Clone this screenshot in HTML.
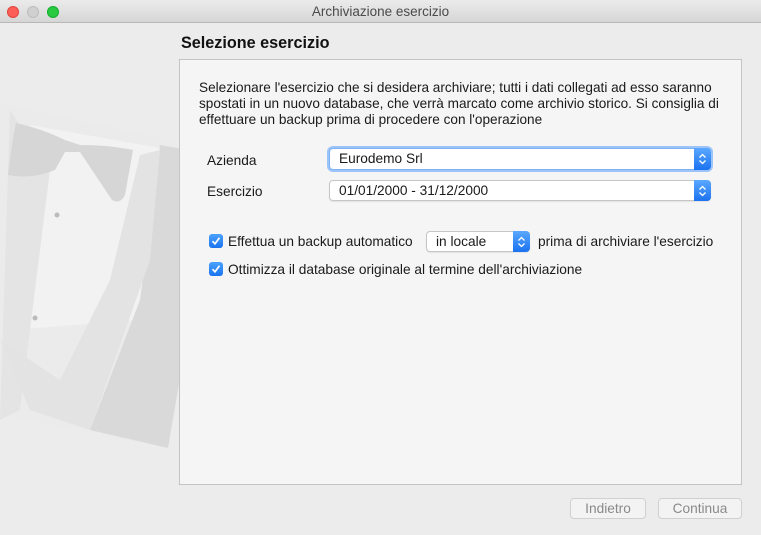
<!DOCTYPE html>
<html><head><meta charset="utf-8"><style>
*{margin:0;padding:0;box-sizing:border-box}
body{width:761px;height:535px;overflow:hidden;background:#ececec;font-family:"Liberation Sans",sans-serif;font-size:13.7px;color:#1a1a1a;position:relative}
.tb{position:absolute;left:0;top:0;width:761px;height:23px;background:linear-gradient(#ebebeb,#d6d6d6);border-bottom:1px solid #b8b8b8;text-align:center;line-height:23px;color:#4a4a4a;font-size:13.5px}
.dot{position:absolute;top:6px;width:12px;height:12px;border-radius:50%}
.abs{position:absolute;white-space:nowrap}
.panel{position:absolute;left:179px;top:59px;width:563px;height:426px;background:#f5f5f5;border:1px solid #c4c4c4}
.pop{position:absolute;background:#fff;border:1px solid #c6c6c6;border-radius:4px;box-shadow:0 1px 1px rgba(0,0,0,.08);padding-left:9px;line-height:19px}
.pop .ar{position:absolute;right:-1px;top:-1px;bottom:-1px;width:17px;background:linear-gradient(#5aa8ff,#1b72f0);border-radius:0 4px 4px 0}
.pop .ar svg{position:absolute;left:4px;top:50%;margin-top:-6px}
.cb{position:absolute;width:14px;height:14px;border-radius:3px;background:linear-gradient(#4aa2ff,#1a73ee)}
.btn{position:absolute;height:21px;background:#f3f3f3;border:1px solid #d0d0d0;border-radius:4px;color:#8a8a8a;text-align:center;line-height:19px}
</style></head><body>
<div class="tb">Archiviazione esercizio</div>
<div class="dot" style="left:7px;background:#fc5f57;border:1px solid #e0443e"></div>
<div class="dot" style="left:27px;background:#d0d0d0;border:1px solid #bdbdbd"></div>
<div class="dot" style="left:47px;background:#29c940;border:1px solid #14ae2c"></div>

<svg class="abs" style="left:0;top:80px" width="240" height="380" viewBox="0 80 240 380">
<polygon points="0,104 222,150 168,448 0,415" fill="#ebebeb"/>
<polygon points="30,125 160,148 140,320 10,330" fill="#f2f2f2"/>
<path d="M10 110 L0 420 L20 410 L50 170 Z" fill="#e4e4e4"/>
<path d="M160 145 L218 155 L168 448 L90 430 L140 300 Z" fill="#d9d9d9"/>
<path d="M0 340 L30 410 L90 430 L150 260 L160 150 L140 155 L110 280 L60 380 Z" fill="#e3e3e3"/>
<path d="M16 123 Q12 140 8 175 Q30 180 55 170 L65 152 L80 152 L112 200 Q120 205 125 195 L133 150 Q110 145 80 145 L65 140 Q40 128 16 123 Z" fill="#d6d6d6"/>
<circle cx="57" cy="215" r="2.5" fill="#bbb"/><circle cx="35" cy="318" r="2.5" fill="#bbb"/>
</svg>

<div class="abs" style="left:181px;top:34px;font-size:16.2px;font-weight:bold;color:#111">Selezione esercizio</div>
<div class="panel"></div>
<div class="abs" style="left:199px;top:80px;line-height:16px;font-size:13.6px">Selezionare l'esercizio che si desidera archiviare; tutti i dati collegati ad esso saranno<br>spostati in un nuovo database, che verrà marcato come archivio storico. Si consiglia di<br>effettuare un backup prima di procedere con l'operazione</div>

<div class="abs" style="left:207px;top:153px">Azienda</div>
<div class="pop" style="left:329px;top:148px;width:382px;height:22px;border-color:#7fb2f5;box-shadow:0 0 0 2px #9cc4f8">Eurodemo Srl<div class="ar"><svg width="9" height="12"><path d="M1.5 4.5L4.5 1.5L7.5 4.5M1.5 7.5L4.5 10.5L7.5 7.5" fill="none" stroke="#fff" stroke-width="1.3"/></svg></div></div>
<div class="abs" style="left:207px;top:184px">Esercizio</div>
<div class="pop" style="left:329px;top:180px;width:382px;height:21px">01/01/2000 - 31/12/2000<div class="ar"><svg width="9" height="12"><path d="M1.5 4.5L4.5 1.5L7.5 4.5M1.5 7.5L4.5 10.5L7.5 7.5" fill="none" stroke="#fff" stroke-width="1.3"/></svg></div></div>

<div class="cb" style="left:209px;top:234px"><svg width="14" height="14"><path d="M3.5 7.2L6 9.8L10.5 3.8" fill="none" stroke="#fff" stroke-width="1.7"/></svg></div>
<div class="abs" style="left:228px;top:234px">Effettua un backup automatico</div>
<div class="pop" style="left:426px;top:231px;width:104px;height:21px">in locale<div class="ar"><svg width="9" height="12"><path d="M1.5 4.5L4.5 1.5L7.5 4.5M1.5 7.5L4.5 10.5L7.5 7.5" fill="none" stroke="#fff" stroke-width="1.3"/></svg></div></div>
<div class="abs" style="left:538px;top:234px">prima di archiviare l'esercizio</div>
<div class="cb" style="left:209px;top:262px"><svg width="14" height="14"><path d="M3.5 7.2L6 9.8L10.5 3.8" fill="none" stroke="#fff" stroke-width="1.7"/></svg></div>
<div class="abs" style="left:228px;top:262px">Ottimizza il database originale al termine dell'archiviazione</div>

<div class="btn" style="left:570px;top:498px;width:76px">Indietro</div>
<div class="btn" style="left:658px;top:498px;width:84px">Continua</div>
</body></html>
